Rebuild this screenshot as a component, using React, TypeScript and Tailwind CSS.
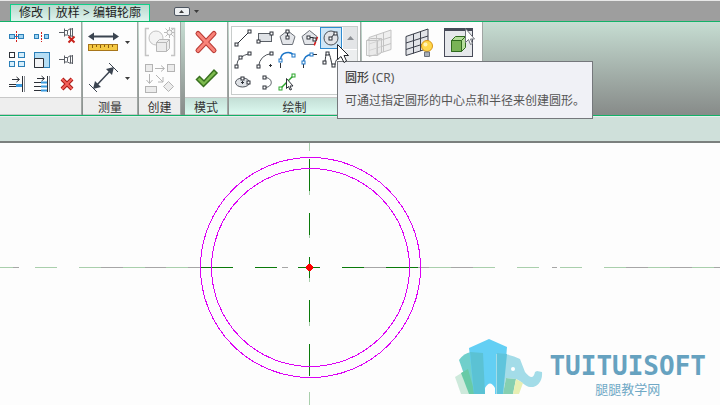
import type { ReactNode } from 'react'

type IconProps = { w: number; h: number; children: ReactNode }

function Icon({ w, h, children }: IconProps) {
  return (
    <svg width={w} height={h} viewBox={`0 0 ${w} ${h}`} fill="none" aria-hidden="true" className="block shrink-0">
      {children}
    </svg>
  )
}

function Handle({ x, y, color = '#2d3138' }: { x: number; y: number; color?: string }) {
  return <rect x={x - 1.5} y={y - 1.5} width="3" height="3" fill="#fff" stroke={color} />
}

function Caret({ up = false }: { up?: boolean }) {
  return (
    <Icon w={5} h={3}>
      <path d={up ? 'M0 3h5L2.5 0z' : 'M0 0h5L2.5 3z'} fill="#3c3c3c" />
    </Icon>
  )
}

const pin = (
  <path d="M2 7.5h5M7.5 3.5v8M7.5 5.500h3l3-2v8l-3-1.500h-3M10.500 5.500v4M15.500 3v9M13.500 4.500l2-1M13.500 10.500l2 1" stroke="#5b5f66" />
)

const modifyTools = [
  {
    name: '拆分图元',
    icon: (
      <>
        <rect x="5.5" y="10.5" width="5" height="4" fill="#9fd4f2" stroke="#2b7fb8" />
        <rect x="14.5" y="10.5" width="5" height="4" fill="#9fd4f2" stroke="#2b7fb8" />
        <path d="M10 12.5h5" stroke="#2b7fb8" />
        <path d="M12.5 7v11" stroke="#d0201c" strokeDasharray="2 1" />
      </>
    ),
  },
  {
    name: '用间隙拆分',
    icon: (
      <>
        <rect x="5.5" y="10.5" width="4" height="4" fill="#9fd4f2" stroke="#2b7fb8" />
        <rect x="15.5" y="10.5" width="4" height="4" fill="#9fd4f2" stroke="#2b7fb8" />
        <path d="M12.5 8v10" stroke="#d0201c" strokeDasharray="2 1" />
      </>
    ),
  },
  {
    name: '解锁',
    icon: (
      <>
        <g transform="translate(3 1)">{pin}</g>
        <path d="M14.5 12.5l6 6M20.5 12.5l-6 6" stroke="#c8231c" strokeWidth="2" />
      </>
    ),
  },
  {
    name: '阵列',
    icon: (
      <>
        <rect x="5.5" y="4.5" width="5" height="5" fill="#fff" stroke="#2d3138" />
        <rect x="14.5" y="4.5" width="6" height="5" fill="#d6effc" stroke="#2b7fb8" />
        <rect x="5.5" y="13.5" width="5" height="5" fill="#d6effc" stroke="#2b7fb8" />
        <rect x="14.5" y="13.5" width="6" height="5" fill="#d6effc" stroke="#2b7fb8" />
      </>
    ),
  },
  {
    name: '缩放',
    icon: (
      <>
        <rect x="5.5" y="4.5" width="15" height="15" fill="#b5def5" stroke="#2b7fb8" />
        <path d="M5.5 10.5h9v9h-9z" fill="#f2f3f5" stroke="#2d3138" />
      </>
    ),
  },
  { name: '锁定', icon: <g transform="translate(3 4)">{pin}</g> },
  {
    name: '修剪单个图元',
    icon: (
      <>
        <path d="M8 7.5h7M12.5 5l3 2.5-3 2.5" stroke="#2d3138" />
        <path d="M5 12.5h7M5 14.5h7" stroke="#2d3138" />
        <path d="M12 13.5h6" stroke="#3a9be0" strokeWidth="3" />
        <path d="M18.5 4v16" stroke="#2d3138" />
        <path d="M20.5 4v16" stroke="#8b9097" />
      </>
    ),
  },
  {
    name: '修剪多个图元',
    icon: (
      <>
        <path d="M8 6.5h7M12.5 4l3 2.5-3 2.5" stroke="#2d3138" />
        <path d="M5 10.5h7M5 14.5h7M5 18.5h7" stroke="#2d3138" />
        <path d="M12 10.5h6M12 14.5h6M12 18.5h6" stroke="#3a9be0" strokeWidth="2" />
        <path d="M18.5 4v16" stroke="#2d3138" />
        <path d="M20.5 4v16" stroke="#8b9097" />
      </>
    ),
  },
  {
    name: '删除',
    icon: (
      <>
        <path d="M8 7l10 10M18 7L8 17" stroke="#a81a16" strokeWidth="4" />
        <path d="M8 7l10 10M18 7L8 17" stroke="#f4615a" strokeWidth="2" />
      </>
    ),
  },
]

const pentagon = <path d="M11.5 3.5l7.5 6-2.5 8h-10l-2.5-8z" fill="#e4e6ea" stroke="#6b7078" />

const drawTools = [
  {
    name: '直线',
    icon: (
      <>
        <path d="M4.5 17.5l13-13" stroke="#2d3138" />
        <Handle x={4.5} y={17.5} />
        <Handle x={17.5} y={4.5} />
      </>
    ),
  },
  {
    name: '矩形',
    icon: (
      <>
        <rect x="4.5" y="6.5" width="13" height="8" fill="#dfe2e6" stroke="#5a5f66" />
        <Handle x={4.5} y={14.5} />
        <Handle x={17.5} y={6.5} />
      </>
    ),
  },
  {
    name: '内接多边形',
    icon: (
      <>
        {pentagon}
        <path d="M11.5 4v6" stroke="#2d3138" />
        <Handle x={11.5} y={4.5} />
        <Handle x={11.5} y={10.5} />
      </>
    ),
  },
  {
    name: '外接多边形',
    icon: (
      <>
        {pentagon}
        <path d="M11.5 10.5h4" stroke="#2d3138" />
        <path d="M19.5 10l-3.500 9" stroke="#e01b1b" strokeWidth="1.5" strokeDasharray="4 1" />
        <Handle x={10.5} y={10.5} />
        <Handle x={16.5} y={12.5} />
      </>
    ),
  },
  {
    name: '圆形',
    icon: (
      <>
        <circle cx="11" cy="11" r="7" fill="#e2e4e8" stroke="#4d5259" />
        <path d="M10.5 11.5l5-6" stroke="#2d3138" />
        <Handle x={10.5} y={11.5} />
        <Handle x={15.5} y={6.5} />
      </>
    ),
  },
  {
    name: '起点-终点-半径弧',
    icon: (
      <>
        <path d="M4.5 17.5Q5 11 8.5 8.5T17.5 4.5" stroke="#4d5259" />
        <Handle x={4.5} y={17.5} />
        <Handle x={8.5} y={8.5} />
        <Handle x={17.5} y={4.5} />
      </>
    ),
  },
  {
    name: '圆心-端点弧',
    icon: (
      <>
        <path d="M4.5 17.5Q6 6 17.5 4.5" stroke="#4d5259" />
        <path d="M16.5 15v3M15 16.5h3" stroke="#2d3138" />
        <Handle x={4.5} y={17.5} />
        <Handle x={17.5} y={4.5} />
      </>
    ),
  },
  {
    name: '相切-端点弧',
    icon: (
      <>
        <path d="M4.5 11.5C4.5 2 15 2 17.5 6.5" stroke="#1c76c8" strokeWidth="1.5" />
        <path d="M4.5 14v5" stroke="#2d3138" />
        <Handle x={4.5} y={11.5} color="#1c76c8" />
        <Handle x={17.5} y={6.5} color="#1c76c8" />
      </>
    ),
  },
  {
    name: '圆角弧',
    icon: (
      <>
        <path d="M5.5 13.5Q6 6 13.5 5.5" stroke="#1c76c8" strokeWidth="1.5" />
        <path d="M5.5 15v4M15 5.5h4" stroke="#2d3138" />
        <Handle x={5.5} y={13.5} color="#1c76c8" />
        <Handle x={13.5} y={5.5} color="#1c76c8" />
      </>
    ),
  },
  {
    name: '样条曲线',
    icon: (
      <>
        <path d="M4.5 13.5C6 11 5 3 8 4s3 13 5.5 13 1-7 5-7" stroke="#2d3138" />
        <Handle x={4.5} y={13.5} />
        <Handle x={7.5} y={4.5} />
        <Handle x={13.5} y={16.5} />
      </>
    ),
  },
  {
    name: '椭圆',
    icon: (
      <>
        <ellipse cx="10.5" cy="11.5" rx="7" ry="4.5" fill="#dfe2e6" stroke="#4d5259" />
        <path d="M9 11.5h3M10.5 10v3" stroke="#2d3138" />
        <Handle x={10.5} y={7.5} />
        <Handle x={16.5} y={11.5} />
      </>
    ),
  },
  {
    name: '半椭圆',
    icon: (
      <>
        <path d="M10.5 6.5c9 0 9 10 0 10" stroke="#4d5259" />
        <Handle x={10.5} y={6.5} />
        <Handle x={10.5} y={16.5} />
      </>
    ),
  },
  {
    name: '拾取线',
    icon: (
      <>
        <path d="M4.5 17.5l13-13" stroke="#2aa52a" strokeWidth="1.5" />
        <Handle x={4.5} y={17.5} color="#2aa52a" />
        <Handle x={17.5} y={4.5} color="#2aa52a" />
        <path d="M10.5 7.5v10l2-2 1.5 3.5 1.5-.5-1.5-3.500h3z" fill="#fff" stroke="#2d3138" />
      </>
    ),
  },
]

const gridPath = 'M5 9.500l22-7.500v19.500l-22 7zM12.500 7v19.500M19.500 4.500v19.500M5 16l22-7M5 22.500l22-7'

const segments = {
  light: 'M0 124.500h13M35 124.500h22M79 124.500h22M123 124.500h22M166 124.500h22M429 124.500h22M473 124.500h22M517 124.500h22M560 124.500h22M604 124.500h22M648 124.500h22M692 124.500h22M309.500 0v8M309.500 48v4M309.500 92v3M309.500 135v4M309.500 179v4M309.500 249v13',
  grey: 'M13 124.500h6M101 124.500h22M145 124.500h21M188 124.500h12M282 124.500h6M364 124.500h22M418 124.500h11M451 124.500h22M552 124.500h5M626 124.500h22M670 124.500h22M714 124.500h6',
  dark: 'M201 124.500h32M255 124.500h22M298 124.500h22M342 124.500h22M386 124.500h32M309.500 16v32M309.500 70v22M309.500 114v21M309.500 157v22M309.500 201v32',
}

type PanelProps = { title?: string; active?: boolean; className?: string; children: ReactNode }

function Panel({ title, active = false, className = '', children }: PanelProps) {
  return (
    <section className={`flex shrink-0 flex-col border-r border-[#a0a5a3] bg-[#fdfdfd] ${className}`}>
      <div className="flex-1">{children}</div>
      <div
        className={`h-[18px] border-y border-[#c8c8c8] text-center text-xs leading-[19px] text-[#333] ${
          active ? 'bg-linear-to-b from-[#c4dfd6] to-[#dcf9f0]' : 'bg-[#eee]'
        }`}
      >
        {title}
      </div>
    </section>
  )
}

function Ribbon() {
  return (
    <div className="flex h-[94px] gap-px overflow-hidden border-b border-[#12b268] bg-linear-to-b from-[#c6ddd2] to-[#878b89]">
      <Panel className="w-[82px]">
        <div className="grid grid-cols-[25px_25px_25px] pt-0.5 pl-1">
          {modifyTools.map((tool) => (
            <button key={tool.name} aria-label={tool.name} className="h-6">
              <Icon w={25} h={24}>{tool.icon}</Icon>
            </button>
          ))}
        </div>
      </Panel>

      <Panel title="测量" className="w-[55px]">
        <div className="flex flex-col gap-1 pt-1 pl-1">
          <button aria-label="测量" className="flex items-center gap-1">
            <Icon w={34} h={32}>
              <path d="M4 10.500h26" stroke="#3b4450" strokeWidth="2" />
              <path d="M1 10.500l6-4v8zM32 10.500l-6-4v8z" fill="#3b4450" />
              <rect x="1.5" y="18.5" width="29" height="6" fill="#f4c842" stroke="#a8761a" />
              <path d="M5.500 19v3M9.500 19v2M13.500 19v3M17.500 19v2M21.500 19v3M25.500 19v2" stroke="#8a5c10" />
            </Icon>
            <Caret />
          </button>
          <button aria-label="对齐尺寸标注" className="flex items-center gap-1">
            <Icon w={34} h={32}>
              <path d="M8 25L25 7" stroke="#3b4450" strokeWidth="1.5" />
              <path d="M6 27l2-8 6 6zM27 5l-2 8-6-6z" fill="#3b4450" />
              <path d="M2 22l8 8M22 1l9 9" stroke="#3b4450" />
            </Icon>
            <Caret />
          </button>
        </div>
      </Panel>

      <Panel title="创建" className="w-[42px]">
        <div className="flex flex-col items-center gap-0.5 pt-1">
          <button aria-label="创建组">
            <Icon w={34} h={32}>
              <path d="M6 2.500H2.500v27H6M28 2.500h3.500v27H28" stroke="#c4c4c4" strokeWidth="1.5" />
              <circle cx="13" cy="12" r="7" fill="#f4f4f4" stroke="#c2c2c2" />
              <path d="M13.500 16.500l3-3h10v9l-3 3h-10zM13.500 16.500h10v9M23.500 16.500l3-3" fill="#ececec" stroke="#b8b8b8" />
              <path d="M26.500 1v11M21 6.500h11M22.500 2.500l8 8M30.500 2.500l-8 8" stroke="#bcbcbc" />
              <circle cx="26.500" cy="6.500" r="2.500" fill="#f6f6f6" stroke="#b4b4b4" />
            </Icon>
          </button>
          <button aria-label="创建类似实例">
            <Icon w={34} h={34}>
              <g stroke="#b4b4b4" fill="#ececec">
                <rect x="2.5" y="4.5" width="7" height="7" />
                <rect x="24.5" y="4.5" width="7" height="7" />
                <rect x="2.5" y="26.5" width="11" height="6" />
                <path d="M25.500 21.500l5 5-5 5-5-5z" />
                <path d="M12 8.500h9M18 5.500l3.500 3-3.500 3M6.500 14v9M3.500 20l3 3.500 3-3.500M13 15l7 7M20 17v5h-5" fill="none" />
              </g>
            </Icon>
          </button>
        </div>
      </Panel>

      <Panel title="模式" active className="ml-[3px] w-[43px]">
        <div className="flex flex-col items-center gap-[5px] pt-1">
          <button aria-label="取消编辑模式">
            <Icon w={32} h={32}>
              <path d="M8 7.500l16 17M24 7.500l-16 17" stroke="#b83a34" strokeWidth="5" strokeLinecap="round" />
              <path d="M8 7.500l16 17M24 7.500l-16 17" stroke="#f98379" strokeWidth="3" strokeLinecap="round" />
            </Icon>
          </button>
          <button aria-label="完成编辑模式">
            <Icon w={32} h={32}>
              <path d="M6.500 16.500l3-3 4.500 4.500L24 7l3 3L13.500 23.500z" fill="#7dba4e" stroke="#38701f" strokeWidth="1.5" />
            </Icon>
          </button>
        </div>
      </Panel>

      <Panel title="绘制" active className="w-[132px]">
        <div className="mt-1 ml-0.5 flex h-[69px] w-[127px] border border-[#c8cccb] bg-white">
          <div className="grid grid-cols-[22px_22px_22px_22px_22px] content-start">
            {drawTools.map((tool) => (
              <button
                key={tool.name}
                aria-label={tool.name}
                className={
                  tool.name === '圆形' ? 'h-[22px] bg-[#cfe6f7] outline-1 -outline-offset-1 outline-[#2f8bd0]' : 'h-[22px]'
                }
              >
                <Icon w={22} h={22}>{tool.icon}</Icon>
              </button>
            ))}
          </div>
          <div className="flex flex-1 flex-col gap-px bg-white pl-px">
            <button aria-label="向上滚动" className="flex h-[22px] items-center justify-center bg-[#e3e5e7]">
              <Icon w={7} h={4}>
                <path d="M0 4h7L3.500 0z" fill="#8b8f94" />
              </Icon>
            </button>
            <button aria-label="向下滚动" className="flex-1 bg-[#eceeef]" />
          </div>
        </div>
      </Panel>

      <Panel active className="w-[121px]">
        <div className="flex gap-[5px] pt-1 pl-px">
          <button aria-label="设置">
            <Icon w={34} h={34}>
              <g transform="translate(1 2)" stroke="#c3c3c3">
                <path d={gridPath} fill="#efefef" />
                <path d="M2.500 12.500l4-2h11v14l-4 3h-11zM2.500 12.500h11v15M13.500 12.500l4-2" fill="#e6e6e6" fillOpacity="0.5" />
              </g>
            </Icon>
          </button>
          <button aria-label="显示">
            <Icon w={34} h={34}>
              <g transform="translate(-1 1)">
                <path d={gridPath} fill="#e2e4e8" stroke="#3b3f4a" />
              </g>
              <circle cx="25" cy="20" r="5.500" fill="#ffd84d" stroke="#d99414" />
              <circle cx="23.500" cy="18.500" r="2" fill="#fff3b8" />
              <path d="M22.500 26h5v4.500h-5z" fill="#a9b0ba" stroke="#69707c" />
            </Icon>
          </button>
          <button aria-label="查看器">
            <Icon w={34} h={34}>
              <rect x="3.5" y="2.5" width="28" height="28" fill="#e6e8eb" stroke="#474a58" />
              <path d="M4 4h27" stroke="#474a58" strokeWidth="2" />
              <path d="M10.500 14.500l4-4h10v11l-4 4h-10z" fill="#b5dd9b" stroke="#2f6a1e" />
              <path d="M10.500 14.500h10v11h-10z" fill="#79b356" stroke="#2f6a1e" />
              <path d="M20.500 14.500l4-4" stroke="#2f6a1e" />
              <path d="M24.500 2.500v14l3-3 2 5 2-1-2-4.500h4z" fill="#fff" stroke="#70747c" />
            </Icon>
          </button>
        </div>
      </Panel>
    </div>
  )
}

function Logo() {
  return (
    <div className="absolute right-3.5 bottom-0 flex h-[70px] items-start gap-1">
      <Icon w={90} h={62}>
        <path d="M0 42l13-8 8 25H6z" fill="#cde9db" />
        <path d="M4 25q5-7 12-8t12 1v41H16z" fill="#70cfcb" />
        <path d="M6 38l7-4 7 25h-6z" fill="#68caa6" />
        <path d="M14 13L34 4l18 8-4 47h-8v-6q-5-9-10 0v6H19z" fill="#63cff4" />
        <path d="M15 17l13 1 2 41H19z" fill="#5bc2d4" />
        <path d="M41 19q13-1 24 5l5 13q8 10 10 0l2-1 5 1c1 10-6 16-12 15-4 0-9-6-14-8l-10-1-3 16h-7z" fill="#a3dce8" />
        <path d="M42 18l10 1-4 40h-6z" fill="#5fc4dc" />
        <path d="M51 43l10 1-3 15H48z" fill="#86cfb0" />
        <path d="M61 44l7 4-4 11h-6z" fill="#e8efb4" />
        <circle cx="58" cy="34" r="2" fill="#fff" />
      </Icon>
      <div className="flex flex-col items-center pt-4 text-[#66a2c0]">
        <span className="font-['DejaVu_Sans_Mono',monospace] text-[26px] leading-[30px] font-bold">TUITUISOFT</span>
        <span className="text-[13px] leading-4 text-[#70a9c6]">腿腿教学网</span>
      </div>
    </div>
  )
}

export default function App() {
  return (
    <div className="relative flex h-screen flex-col overflow-hidden bg-[#fdfdfd] font-['Noto_Sans','Noto_Sans_CJK_SC',sans-serif] text-xs text-[#333]">
      <header className="flex h-[22px] items-end gap-6 border-t border-b border-t-[#e8e8e8] border-b-[#12b268] bg-[#9e9e9e] pl-2.5">
        <button className="h-[17px] border-x border-t border-[#10d08a] bg-linear-to-b from-[#b9d9ce] to-[#dff3ed] px-2 text-xs leading-4 whitespace-pre text-[#222]">
          {'修改 | 放样 > 编辑轮廓'}
        </button>
        <div className="flex items-center gap-1 self-center">
          <button
            aria-label="最小化功能区"
            className="flex h-[9px] w-4 items-center justify-center rounded-[2px] border border-[#4d5560] bg-[#eef0f2]"
          >
            <Caret up />
          </button>
          <button aria-label="功能区选项">
            <Caret />
          </button>
        </div>
      </header>

      <Ribbon />

      <div className="h-[27px] shrink-0 border-t border-b-2 border-t-[#e4efeb] border-b-[#7b807e] bg-[#cfe0da]" />

      <main className="relative flex-1 overflow-hidden">
        <svg width="720" height="262" viewBox="0 0 720 262" fill="none" shapeRendering="crispEdges" role="img" aria-label="轮廓草图">
          <path d={segments.light} stroke="#a9cfac" />
          <path d={segments.grey} stroke="#a6a6a6" />
          <path d={segments.dark} stroke="#0a7a0a" />
          <circle cx="310.500" cy="124.500" r="110" stroke="#dc00f5" />
          <circle cx="310.500" cy="124.500" r="99" stroke="#dc00f5" />
          <path d="M308 121h3v1h1v1h1v3h-1v1h-1v1h-3v-1h-1v-1h-1v-3h1v-1h1z" fill="#f00" />
        </svg>
        <Logo />
      </main>

      <div
        role="tooltip"
        className="absolute top-[61px] left-[337px] flex h-[58px] w-[256px] flex-col gap-[5px] border border-[#75787c] bg-[#f0f1f6] px-[7px] pt-[7px] text-[#555]"
      >
        <p className="leading-[18px]">
          <strong className="font-medium text-[#444]">圆形</strong> (CR)
        </p>
        <p className="leading-[18px] whitespace-nowrap">可通过指定圆形的中心点和半径来创建圆形。</p>
      </div>

      <div className="absolute top-[43px] left-[336px]">
        <Icon w={14} h={21}>
          <path d="M1.500 1.500v15l3.500-3 3 6 2.500-1.500-2.500-5.500h4.500z" fill="#fff" stroke="#22252b" />
        </Icon>
      </div>
    </div>
  )
}
